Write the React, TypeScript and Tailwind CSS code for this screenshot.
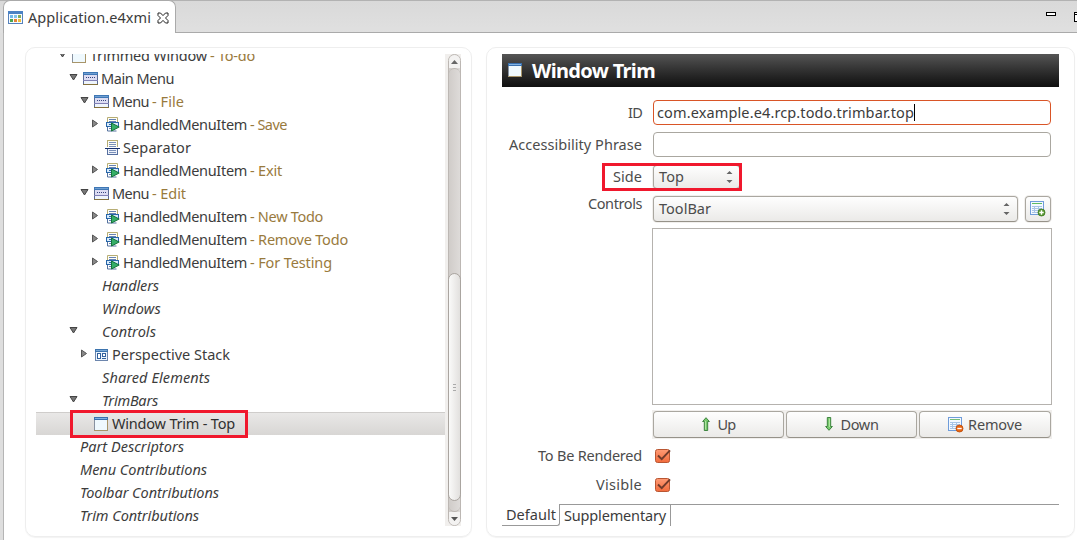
import { useLayoutEffect, useRef, type ReactNode } from "react";

function Fit({ w, children, className = "" }: { w: number; children: string; className?: string }) {
  const ref = useRef<HTMLSpanElement>(null);
  useLayoutEffect(() => {
    const el = ref.current;
    if (!el) return;
    el.style.letterSpacing = "0px";
    const range = document.createRange();
    range.selectNodeContents(el);
    const natural = range.getBoundingClientRect().width;
    el.style.letterSpacing = `${(w - natural) / children.length}px`;
  }, [w, children]);
  return (
    <span ref={ref} className={`block shrink-0 pb-[2px] leading-5 whitespace-pre ${className}`} style={{ width: w }}>
      {children}
    </span>
  );
}

function MenuIcon() {
  return (
    <svg width="15" height="13" viewBox="0 0 15 13" shapeRendering="crispEdges">
      <rect x="0.5" y="0.5" width="14" height="12" fill="#eef4fb" stroke="#5a6a94" />
      <rect width="15" height="3" fill="#3f77b5" />
      <path d="M1 1.5h13" stroke="#6f9fd2" />
      <rect x="1" y="3" width="13" height="5" fill="#dcdcf2" />
      <path d="M3 5.5h9" stroke="#37457e" strokeDasharray="1 1" />
      <path d="M0 8.5h15" stroke="#8180b5" />
      <path d="M0 12.5h15" stroke="#85713c" />
    </svg>
  );
}

function WindowIcon() {
  return (
    <svg width="14" height="14" viewBox="0 0 14 14" shapeRendering="crispEdges">
      <rect x="0.5" y="0.5" width="13" height="13" fill="#eff9fe" stroke="#a89569" />
      <rect width="14" height="3" fill="#3970ae" />
      <path d="M1 1.5h12" stroke="#80b3e4" />
      <path d="M.5 3v10" stroke="#8791a0" />
    </svg>
  );
}

function ItemIcon() {
  return (
    <svg width="14" height="15" viewBox="0 0 14 15">
      <path d="M1.5 5V.5h10V5" fill="#fffef4" stroke="#b7ad74" />
      <path d="M3 2.5h7M3 4.5h7" stroke="#6682b4" />
      <rect x=".5" y="5.5" width="12" height="4" fill="#d7eafb" stroke="#2866a8" />
      <path d="M3 7.5h5" stroke="#2866a8" />
      <path d="M1.5 10v4h9" fill="none" stroke="#53719e" />
      <path d="M3 11.5h5" stroke="#6682b4" />
      <path d="M5.5 6v8L13.2 10z" fill="#35ae68" stroke="#16733d" />
    </svg>
  );
}

function SeparatorIcon() {
  return (
    <svg width="15" height="15" viewBox="0 0 15 15" shapeRendering="crispEdges">
      <path d="M2.5 7V.5h10V7" fill="#fffef4" stroke="#b7ad74" />
      <path d="M4 2.5h7M4 4.5h7M4 6.5h7" stroke="#7b91b9" />
      <path d="M0 8.5h15" stroke="#16306c" />
      <path d="M2.5 9v5.5h10V9" fill="#eef2fb" stroke="#566f9f" />
      <path d="M4 10.5h7M4 12.5h7" stroke="#7b91b9" />
    </svg>
  );
}

function PerspectiveIcon() {
  return (
    <svg width="13" height="12" viewBox="0 0 13 12" shapeRendering="crispEdges">
      <rect x=".5" y=".5" width="12" height="11" fill="#edf5fc" stroke="#6d86ad" />
      <rect width="13" height="3" fill="#3d74ae" />
      <path d="M1 1.5h11" stroke="#79a9d6" />
      <path d="M2.5 4.5h3v5h-3zM7.5 4.5h3v3h-3zM7 9.5h4" fill="#fff" stroke="#31619e" />
    </svg>
  );
}

function TableIcon({ kind }: { kind: "add" | "remove" }) {
  return (
    <svg width="16" height="16" viewBox="0 0 16 16">
      <rect x=".5" y=".5" width="13" height="13" fill="#f4f9ff" stroke="#6f9cda" />
      <path d="M2 2.5h10" stroke={kind === "add" ? "#5dbb62" : "#75bd78"} />
      <path d="M2 5.5h10M2 7.5h10M2 9.5h10M2 11.5h10M4.5 5v7M8.5 5v7" stroke="#a8c4e6" />
      <circle cx="11.5" cy="11.5" r="3.5" fill={kind === "add" ? "#5a9a32" : "#ea6512"} stroke={kind === "add" ? "#39761d" : "#b64806"} strokeWidth=".8" />
      <path d={kind === "add" ? "M9.3 11.5h4.4M11.5 9.3v4.4" : "M9.3 11.5h4.4"} stroke="#fff" strokeWidth="1.4" />
    </svg>
  );
}

function Arrow({ down = false }: { down?: boolean }) {
  return (
    <svg width="8" height="14" viewBox="0 0 8 14" className={down ? "mb-[2px] rotate-180" : "mb-[2px]"}>
      <path d="M4 .7 7.4 4.5H5.7v9H2.3v-9H.6z" fill="#77c96c" stroke="#337c35" strokeWidth=".9" />
      <path d="M3.5 4v8.5" stroke="#afe5a0" />
    </svg>
  );
}

const icons = { menu: MenuIcon, window: WindowIcon, item: ItemIcon, sep: SeparatorIcon, persp: PerspectiveIcon };

type RowData = {
  pad: string;
  text: string;
  w: number;
  icon?: keyof typeof icons;
  tri?: "down" | "right";
  note?: string;
  nw?: number;
  selected?: boolean;
};

const handled = { pad: "pl-[55px]", text: "HandledMenuItem", w: 124, icon: "item", tri: "right" } as const;

const rows: RowData[] = [
  { pad: "pl-[22px]", text: "Trimmed Window", w: 117, icon: "window", tri: "down", note: "- To-do", nw: 45 },
  { pad: "pl-[33px]", text: "Main Menu", w: 73, icon: "menu", tri: "down" },
  { pad: "pl-[44px]", text: "Menu", w: 37, icon: "menu", tri: "down", note: "- File", nw: 32 },
  { ...handled, note: "- Save", nw: 37 },
  { pad: "pl-[55px]", text: "Separator", w: 68, icon: "sep" },
  { ...handled, note: "- Exit", nw: 32 },
  { pad: "pl-[44px]", text: "Menu", w: 37, icon: "menu", tri: "down", note: "- Edit", nw: 34 },
  { ...handled, note: "- New Todo", nw: 73 },
  { ...handled, note: "- Remove Todo", nw: 98 },
  { ...handled, note: "- For Testing", nw: 82 },
  { pad: "pl-[34px]", text: "Handlers", w: 57 },
  { pad: "pl-[34px]", text: "Windows", w: 59 },
  { pad: "pl-[34px]", text: "Controls", w: 54, tri: "down" },
  { pad: "pl-[44px]", text: "Perspective Stack", w: 118, icon: "persp", tri: "right" },
  { pad: "pl-[34px]", text: "Shared Elements", w: 108 },
  { pad: "pl-[34px]", text: "TrimBars", w: 56, tri: "down" },
  { pad: "pl-[44px]", text: "Window Trim - Top", w: 123, icon: "window", selected: true },
  { pad: "pl-[12px]", text: "Part Descriptors", w: 104 },
  { pad: "pl-[12px]", text: "Menu Contributions", w: 127 },
  { pad: "pl-[12px]", text: "Toolbar Contributions", w: 139 },
  { pad: "pl-[12px]", text: "Trim Contributions", w: 119 },
];

function TreeRow({ row }: { row: RowData }) {
  const Icon = row.icon ? icons[row.icon] : null;
  return (
    <div
      className={`relative flex h-[23px] shrink-0 items-center ${row.pad} ${
        row.selected ? "border-t border-[#cfcdcb] bg-linear-to-b from-[#e9e8e7] to-[#d8d6d4] text-[#303030]" : ""
      }`}
    >
      <span className={`mb-[3px] shrink-0 ${Icon ? "w-[13px]" : "-ml-px w-[14px]"}`}>
        {row.tri === "down" && (
          <svg width="9" height="8" viewBox="0 0 9 8"><path d="M1 1.5h7L4.5 7z" fill="#777" stroke="#444" /></svg>
        )}
        {row.tri === "right" && (
          <svg width="8" height="9" viewBox="0 0 8 9"><path d="M1.5 1v7L6.5 4.5z" fill="#888" stroke="#555" /></svg>
        )}
      </span>
      <span className={`flex w-[19px] shrink-0 ${row.icon === "item" || row.icon === "persp" ? "pl-[2px]" : "pl-px"}`}>
        {Icon && <Icon />}
      </span>
      <Fit w={row.w} className={Icon ? "" : "italic"}>{row.text}</Fit>
      {row.note && <Fit w={row.nw!} className="ml-[3px] text-[#997a3d]">{row.note}</Fit>}
      {row.selected && <div className="absolute top-[-3px] left-[34px] h-[28px] w-[178px] border-3 border-[#f0182d]" />}
    </div>
  );
}

function Scrollbar() {
  return (
    <div className="h-[472px] w-4 shrink-0 bg-[#f1efed] pl-[3px]">
      <div className="flex h-full w-[13px] flex-col rounded-[7px] border border-[#bcb7b3] bg-linear-to-r from-[#d0ccc9] to-[#dedbd9]">
        <div className="flex h-[13px] items-center justify-center rounded-t-[7px] bg-[#f3f2f1]">
          <svg width="7" height="4"><path d="M3.5 0 7 4H0z" fill="#666" /></svg>
        </div>
        <div className="h-[205px] rounded-t-md border-t border-[#bcb7b3]" />
        <div className="-mx-px flex h-[228px] flex-col items-center justify-center gap-[2px] rounded-[7px] border border-[#aaa5a0] bg-linear-to-r from-[#fafaf9] to-[#e2e0de]">
          <div className="h-px w-[3px] bg-[#aaa]" />
          <div className="h-px w-[3px] bg-[#aaa]" />
          <div className="h-px w-[3px] bg-[#aaa]" />
        </div>
        <div className="h-[11px] rounded-b-md border-b border-[#bcb7b3]" />
        <div className="flex h-[13px] items-center justify-center rounded-b-[7px] bg-[#f3f2f1]">
          <svg width="7" height="4"><path d="M0 0h7L3.5 4z" fill="#555" /></svg>
        </div>
      </div>
    </div>
  );
}

function Field({ label, lw, h, children }: { label: string; lw: number; h: string; children: ReactNode }) {
  return (
    <div className={`flex items-center ${h}`}>
      <div className="mr-[11px] flex w-[156px] shrink-0 justify-end text-[#4c4c4c]"><Fit w={lw}>{label}</Fit></div>
      {children}
    </div>
  );
}

function Spin() {
  return (
    <svg width="7" height="12" viewBox="0 0 7 12"><path d="M.5 3h6L3.500 0zM.5 9h6l-3 3z" fill="#656565" /></svg>
  );
}

const raised = "rounded border border-[#aaa7a0] border-b-[#969289] bg-linear-to-b from-[#fefefe] to-[#ebeae8] text-[#4c4c4c] shadow-[0_0_0_1px_#f1efed]";

function Check() {
  return (
    <svg width="17" height="16" viewBox="0 0 17 16">
      <defs>
        <linearGradient id="orange" x2="0" y2="1"><stop stopColor="#ff9b75" /><stop offset="1" stopColor="#f26b3c" /></linearGradient>
      </defs>
      <rect x="1.5" y="1.5" width="14" height="13" rx="2" fill="url(#orange)" stroke="#b95632" />
      <path d="m4 7.5 3.7 3.6L16 2.4" fill="none" stroke="#713b2b" strokeWidth="2" />
    </svg>
  );
}

function PushButton({ label, w, size, children }: { label: string; w: number; size: string; children: ReactNode }) {
  return (
    <button className={`flex h-[27px] items-center justify-center ${size} ${raised}`}>
      {children}
      <Fit w={w}>{label}</Fit>
    </button>
  );
}

export default function App() {
  return (
    <div className="flex h-[540px] w-[1077px] flex-col overflow-hidden bg-[#dedede] font-['Noto_Sans',sans-serif] text-[14.5px] leading-[22px] text-[#3c3c3c]">
      <header className="flex h-[33px] shrink-0 border-t border-[#b2b2b2] bg-linear-to-b from-[#d9d9d9] to-[#e0e0e0] pl-[3px]">
        <div className="-mt-px flex h-[33px] w-[173px] items-center rounded-t-[7px] border border-b-0 border-[#aaa] bg-white pl-1">
          <svg width="15" height="13" viewBox="0 0 15 13" shapeRendering="crispEdges">
            <rect x=".5" y=".5" width="14" height="12" fill="#f7fbff" stroke="#5682bc" />
            <rect width="15" height="3" fill="#4b82c4" />
            <path d="M2 4h3v3H2z" fill="#70b8ec" /><path d="M6 4h3v3H6z" fill="#81c4ee" /><path d="M10 4h3v3h-3z" fill="#80ad5c" />
            <path d="M2 8h3v3H2z" fill="#4aa651" /><path d="M6 8h3v3H6z" fill="#e58338" /><path d="M10 8h3v3h-3z" fill="#f0bd3b" />
          </svg>
          <Fit w={123} className="mt-[2px] ml-[5px]">Application.e4xmi</Fit>
          <svg className="mt-px ml-[6px]" width="12" height="12" viewBox="0 0 12 12">
            <path d="M1 1h2.5L6 3.6 8.5 1H11v2.5L8.500 6 11 8.500V11H8.500L6 8.400 3.500 11H1V8.500L3.500 6 1 3.500z" fill="white" stroke="#222" />
          </svg>
        </div>
        <div className="flex flex-1 border-b border-[#aaa]">
          <svg className="mt-[11px] ml-auto" width="31" height="11" shapeRendering="crispEdges">
            <path d="M.5.5h9v3h-9z" fill="white" stroke="black" />
            <path d="M32 .5h-3.500v9H32M28 2.500h4" fill="white" stroke="black" />
          </svg>
        </div>
      </header>
      <main className="ml-[3px] flex h-[507px] border-l border-[#b5b5b5] bg-white pt-[14px]">
        <section className="ml-[21px] flex h-[490px] w-[447px] shrink-0 rounded-[10px] border border-[#eeeeee] pt-[6px] pl-[10px] shadow-[0_1px_1px_#f3f3f3]">
          <div className="flex h-[473px] w-[409px] shrink-0 flex-col overflow-hidden">
            <div className="-mt-[10px] flex flex-col">
              {rows.map((row, i) => <TreeRow key={i} row={row} />)}
            </div>
          </div>
          <Scrollbar />
        </section>
        <section className="ml-[14px] h-[490px] w-[589px] shrink-0 rounded-[10px] border border-[#eeeeee] pt-[6px] pl-[15px] shadow-[0_1px_1px_#f3f3f3]">
          <h1 className="flex h-[33px] w-[557px] items-center bg-linear-to-b from-[#555] to-[#101010] pl-[6px] text-[20px] font-bold text-white">
            <div className="mb-px"><WindowIcon /></div>
            <Fit w={123} className="mt-[2px] ml-[10px]">Window Trim</Fit>
          </h1>
          <div className="w-[557px] pt-[13px]">
            <div className="-ml-[16px]">
              <Field label="ID" lw={14} h="h-[25px]">
                <div className="flex h-[25px] w-[398px] items-center rounded border border-[#d95527] bg-white pl-[3px] text-[#3c3c3c]">
                  <Fit w={257}>com.example.e4.rcp.todo.trimbar.top</Fit>
                  <div className="h-[17px] w-px bg-black" />
                </div>
              </Field>
              <div className="h-[7px]" />
              <Field label="Accessibility Phrase" lw={133} h="h-[25px]">
                <div className="h-[25px] w-[398px] rounded border border-[#aaa7a0] bg-white" />
              </Field>
              <div className="relative mt-2">
                <Field label="Side" lw={29} h="h-6">
                  <div className={`flex h-6 w-[87px] items-center justify-between pr-[6px] pl-[5px] ${raised}`}>
                    <Fit w={25}>Top</Fit><Spin />
                  </div>
                </Field>
                <div className="absolute top-[-2px] left-[116px] h-[28px] w-[140px] border-3 border-[#f0182d]" />
              </div>
              <div className="mt-[7px] flex h-[26px]">
                <div className="mr-[11px] -mt-[3px] flex w-[156px] shrink-0 justify-end text-[#4c4c4c]"><Fit w={54}>Controls</Fit></div>
                <div className={`flex h-[26px] w-[365px] items-center justify-between pr-[7px] pl-[5px] ${raised}`}>
                  <Fit w={52}>ToolBar</Fit><Spin />
                </div>
                <button className={`ml-[7px] flex h-[26px] w-[26px] items-center justify-center ${raised}`}><TableIcon kind="add" /></button>
              </div>
              <div className="mt-[6px] ml-[166px] h-[177px] w-[400px] border border-[#b5b2ae]" />
              <div className="mt-[5px] ml-[166px] flex h-[29px] w-[400px] gap-[2px] bg-[#f1efed] p-px">
                <PushButton label="Up" w={18} size="w-[131px] gap-[8px]"><Arrow /></PushButton>
                <PushButton label="Down" w={38} size="w-[131px] gap-[8px]"><Arrow down /></PushButton>
                <PushButton label="Remove" w={54} size="w-[132px] gap-1"><TableIcon kind="remove" /></PushButton>
              </div>
              <div className="mt-[2px]">
                <Field label="To Be Rendered" lw={104} h="h-[29px]"><div className="ml-px"><Check /></div></Field>
                <Field label="Visible" lw={46} h="h-[29px]"><div className="ml-px"><Check /></div></Field>
              </div>
            </div>
          </div>
          <div className="mt-[5px] flex h-[22px] w-[557px]">
            <div className="h-[22px] w-[58px] rounded-br-[3px] border-r border-b border-[#999] pl-1"><Fit w={50}>Default</Fit></div>
            <div className="flex h-[22px] flex-1 border-t border-[#999]">
              <div className="h-[21px] w-[111px] border-r border-[#999] pl-1"><Fit w={102}>Supplementary</Fit></div>
            </div>
          </div>
        </section>
      </main>
    </div>
  );
}
